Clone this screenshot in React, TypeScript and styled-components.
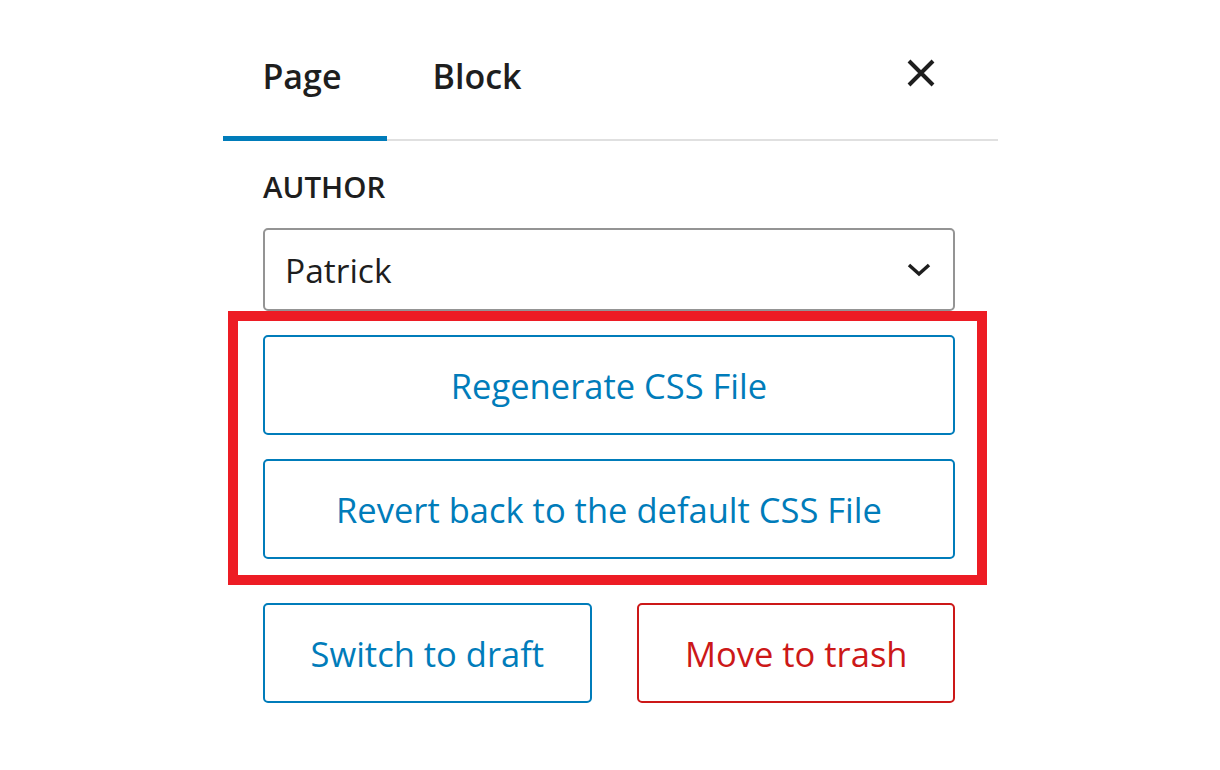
import React from "react";
import styled, { createGlobalStyle } from "styled-components";

const Global = createGlobalStyle`
  html, body { margin: 0; padding: 0; background: #fff; }
  body { font-family: "Open Sans", "Noto Sans", "Liberation Sans", sans-serif; color: #1e1e1e; }
  * { box-sizing: border-box; }
`;

const Panel = styled.div`
  margin-left: 223px;
  width: 775px;
  display: flex;
  flex-direction: column;
`;

const TabBar = styled.div`
  display: flex;
  align-items: stretch;
  height: 141px;
  border-bottom: 2px solid #e0e0e0;
`;

const Tab = styled.div<{ $active?: boolean; $w: number; $shift?: number }>`
  width: ${(p) => p.$w}px;
  display: flex;
  align-items: center;
  justify-content: center;
  padding-top: 10px;
  padding-right: ${(p) => p.$shift ?? 0}px;
  font-size: 34px;
  font-weight: 600;
  color: #1e1e1e;
  box-shadow: ${(p) => (p.$active ? "inset 0 -5px 0 #007cba" : "none")};
  margin-bottom: -2px;
`;

const Spacer = styled.div`
  flex: 1;
`;

const CloseButton = styled.div`
  width: 100px;
  display: flex;
  align-items: center;
  justify-content: center;
  padding-top: 6px;
  margin-right: 27px;
`;

const Body = styled.div`
  padding: 26px 43px 0 40px;
  display: flex;
  flex-direction: column;
`;

const Label = styled.div`
  font-size: 29.5px;
  font-weight: 600;
  text-transform: uppercase;
  line-height: 40px;
  color: #1e1e1e;
`;

const Select = styled.div`
  margin-top: 21px;
  height: 83px;
  border: 2px solid #949494;
  border-radius: 5px;
  display: flex;
  align-items: center;
  justify-content: space-between;
  padding: 0 22px 0 20px;
  font-size: 33.5px;
  color: #1e1e1e;
`;

const Highlight = styled.div`
  margin: 0 -32px 0 -35px;
  border: 10px solid #ed1c24;
  padding: 14px 22px 16px 25px;
  display: flex;
  flex-direction: column;
  gap: 24px;
`;

const Button = styled.div<{ $tone?: "blue" | "red" }>`
  height: 100px;
  border: 2px solid ${(p) => (p.$tone === "red" ? "#cc1818" : "#007cba")};
  color: ${(p) => (p.$tone === "red" ? "#cc1818" : "#007cba")};
  border-radius: 5px;
  display: flex;
  align-items: center;
  justify-content: center;
  font-size: 34.5px;
  padding: 0 45.5px;
  white-space: nowrap;
`;

const Row = styled.div`
  margin-top: 18px;
  display: flex;
  justify-content: space-between;
`;

export default function App() {
  return (
    <>
      <Global />
      <Panel>
        <TabBar>
          <Tab $active $w={164} $shift={6}>Page</Tab>
          <Tab $w={180}>Block</Tab>
          <Spacer />
          <CloseButton>
            <svg width="30" height="30" viewBox="0 0 30 30">
              <path d="M3 3 L27 27 M27 3 L3 27" stroke="#1e1e1e" strokeWidth="4" fill="none" />
            </svg>
          </CloseButton>
        </TabBar>
        <Body>
          <Label>Author</Label>
          <Select>
            <span>Patrick</span>
            <svg width="24" height="14" viewBox="0 0 24 14">
              <path d="M2 2 L12 11 L22 2" stroke="#1e1e1e" strokeWidth="3.5" fill="none" />
            </svg>
          </Select>
          <Highlight>
            <Button>Regenerate CSS File</Button>
            <Button>Revert back to the default CSS File</Button>
          </Highlight>
          <Row>
            <Button>Switch to draft</Button>
            <Button $tone="red">Move to trash</Button>
          </Row>
        </Body>
      </Panel>
    </>
  );
}
